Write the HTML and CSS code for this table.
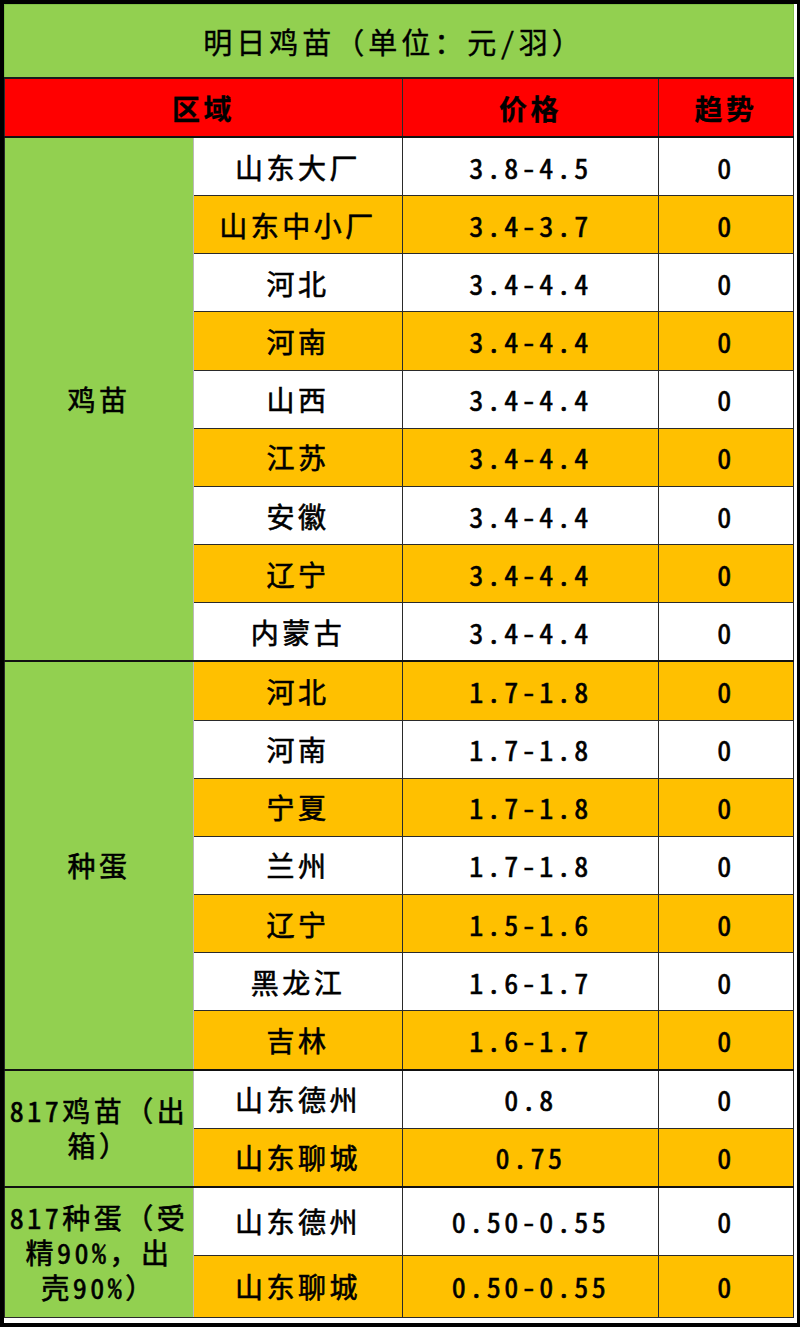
FILE: index.html
```html
<!DOCTYPE html>
<html lang="zh-CN">
<head>
<meta charset="utf-8">
<title>明日鸡苗</title>
<link rel="stylesheet" href="styles.css">
</head>
<body>
<div class="frame">
<table class="price">
<colgroup>
<col class="c1"><col class="c2"><col class="c3"><col class="c4">
</colgroup>
<tbody>
<tr class="title"><td colspan="4">明日鸡苗（单位：元/羽）</td></tr>
<tr class="head"><td colspan="2">区域</td><td>价格</td><td>趋势</td></tr>

<tr class="r w"><td class="grp" rowspan="9">鸡苗</td><td>山东大厂</td><td>3.8-4.5</td><td>0</td></tr>
<tr class="r o"><td>山东中小厂</td><td>3.4-3.7</td><td>0</td></tr>
<tr class="r w"><td>河北</td><td>3.4-4.4</td><td>0</td></tr>
<tr class="r o"><td>河南</td><td>3.4-4.4</td><td>0</td></tr>
<tr class="r w"><td>山西</td><td>3.4-4.4</td><td>0</td></tr>
<tr class="r o"><td>江苏</td><td>3.4-4.4</td><td>0</td></tr>
<tr class="r w"><td>安徽</td><td>3.4-4.4</td><td>0</td></tr>
<tr class="r o"><td>辽宁</td><td>3.4-4.4</td><td>0</td></tr>
<tr class="r w"><td>内蒙古</td><td>3.4-4.4</td><td>0</td></tr>

<tr class="r o first"><td class="grp" rowspan="7">种蛋</td><td>河北</td><td>1.7-1.8</td><td>0</td></tr>
<tr class="r w"><td>河南</td><td>1.7-1.8</td><td>0</td></tr>
<tr class="r o"><td>宁夏</td><td>1.7-1.8</td><td>0</td></tr>
<tr class="r w"><td>兰州</td><td>1.7-1.8</td><td>0</td></tr>
<tr class="r o"><td>辽宁</td><td>1.5-1.6</td><td>0</td></tr>
<tr class="r w"><td>黑龙江</td><td>1.6-1.7</td><td>0</td></tr>
<tr class="r o"><td>吉林</td><td>1.6-1.7</td><td>0</td></tr>

<tr class="r w first"><td class="grp multi" rowspan="2"><span class="ln">817鸡苗（出</span><span class="ln">箱）</span></td><td>山东德州</td><td>0.8</td><td>0</td></tr>
<tr class="r o"><td>山东聊城</td><td>0.75</td><td>0</td></tr>

<tr class="r w first tall"><td class="grp multi" rowspan="2"><span class="ln">817种蛋（受</span><span class="ln">精90%，出</span><span class="ln">壳90%）</span></td><td>山东德州</td><td>0.50-0.55</td><td>0</td></tr>
<tr class="r o last"><td>山东聊城</td><td>0.50-0.55</td><td>0</td></tr>
</tbody>
</table>
</div>
</body>
</html>
```

FILE: styles.css
```css
html, body {
  margin: 0;
  padding: 0;
  background: #000;
}

.frame {
  margin: 4px 3px 2px 4px;
  background: #fff;
  padding: 0 4px 5px 0;
  width: 789px;
}

.price {
  border-collapse: collapse;
  table-layout: fixed;
  width: 789px;
  font-family: "Noto Sans Mono CJK SC", "Noto Sans CJK SC", sans-serif;
  font-size: 28px;
  letter-spacing: 3.5px;
  color: #000;
  -webkit-text-stroke: 0.6px #000;
}

.c1 { width: 189px; }
.c2 { width: 209px; }
.c3 { width: 256px; }
.c4 { width: 135px; }

.price td {
  padding: 0;
  text-align: center;
  vertical-align: middle;
  border: 1px solid #2a2a2a;
  white-space: nowrap;
  line-height: 36px;
}

.title td {
  height: 72px;
  background: #92d050;
  border: 1px solid #7fbf45;
  border-bottom: 2px solid #1a1a1a;
  padding-right: 10px;
  font-size: 29px;
  letter-spacing: 4px;
  -webkit-text-stroke: 0.4px #000;
}

.head td {
  height: 57px;
  background: #ff0000;
  font-weight: 700;
  -webkit-text-stroke: 0.3px #000;
  border-bottom: 2px solid #111;
}

.r td { height: 57.17px; }
.r.tall td { height: 67px; }
.r.last td { height: 61px; }

.r.w td { background: #fff; }
.r.o td { background: #ffc000; }

.r td.grp {
  background: #92d050;
  border-right: 1px solid #b9b9b9;
}

.r.first td {
  border-top: 2px solid #111;
}

.multi .ln {
  display: block;
  height: 35px;
  line-height: 35px;
}
```
